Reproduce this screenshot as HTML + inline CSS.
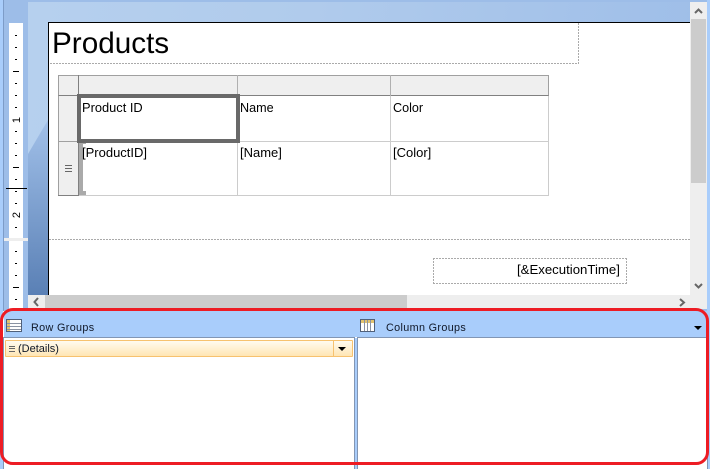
<!DOCTYPE html>
<html><head><meta charset="utf-8"><style>
html,body{margin:0;padding:0;background:#fff}
#r{position:relative;width:710px;height:469px;overflow:hidden;background:#fff;font-family:"Liberation Sans",sans-serif;color:#000}
#r div{position:absolute;box-sizing:border-box}
.t{font-size:12.6px;line-height:14px;white-space:nowrap}
.h{background:#efefef}
.dh{height:1px;background:repeating-linear-gradient(90deg,#aaa 0 2px,#fff 2px 3px)}
.dv{width:1px;background:repeating-linear-gradient(180deg,#aaa 0 2px,#fff 2px 3px)}
svg{position:absolute;overflow:visible}
</style></head><body><div id="r">
<div style="left:0;top:0;width:710px;height:311px;background:#9dbde8"></div>
<div style="left:0;top:0;width:3px;height:311px;background:#a9cdfb"></div>
<div style="left:3px;top:0;width:1px;height:311px;background:#7d9cc8"></div>
<div style="left:707px;top:0;width:3px;height:469px;background:#a9cdfb"></div>
<div style="left:28px;top:2px;width:662px;height:293px;background:linear-gradient(100deg,#b6d0ee 0%,#b0cbec 40%,#9dbde8 100%)"></div>
<div style="left:28px;top:120px;width:20px;height:175px;background:linear-gradient(180deg,#a2c0e8 0%,#8fb0dc 25%,#5a80b5 100%);clip-path:polygon(0 34px,20px 0,20px 100%,0 100%)"></div>
<div style="left:9px;top:23px;width:14px;height:286px;background:#fff"></div>
<div style="left:4px;top:238px;width:24px;height:3px;background:#eee"></div>
<div style="left:6px;top:188px;width:21px;height:1px;background:#000"></div>
<svg width="30" height="310" style="left:0;top:0" shape-rendering="crispEdges">
<g fill="#000">
<rect x="15" y="35" width="2" height="1"/><rect x="15" y="47" width="2" height="1"/><rect x="15" y="59" width="2" height="1"/><rect x="13" y="71" width="6" height="1"/><rect x="15" y="83" width="2" height="1"/><rect x="15" y="95" width="2" height="1"/><rect x="15" y="107" width="2" height="1"/><rect x="15" y="131" width="2" height="1"/><rect x="15" y="143" width="2" height="1"/><rect x="15" y="155" width="2" height="1"/><rect x="13" y="167" width="6" height="1"/><rect x="15" y="179" width="2" height="1"/><rect x="15" y="191" width="2" height="1"/><rect x="15" y="203" width="2" height="1"/><rect x="15" y="227" width="2" height="1"/><rect x="15" y="251" width="2" height="1"/><rect x="15" y="263" width="2" height="1"/><rect x="15" y="275" width="2" height="1"/><rect x="13" y="287" width="6" height="1"/><rect x="15" y="299" width="2" height="1"/>
</g>
<text transform="translate(20,120) rotate(-90)" font-family="Liberation Sans" font-size="11" text-anchor="middle">1</text>
<text transform="translate(20,215) rotate(-90)" font-family="Liberation Sans" font-size="11" text-anchor="middle">2</text>
</svg>
<!-- page -->
<div style="left:48px;top:22px;width:642px;height:273px;background:#fff;border-top:1px solid #000;border-left:1px solid #000"></div>
<div class="dh" style="left:50px;top:63px;width:529px"></div>
<div class="dv" style="left:578px;top:23px;height:41px"></div>
<div class="t" style="left:52px;top:27px;font-size:29.7px;line-height:33px">Products</div>
<!-- table -->
<div class="h" style="left:58px;top:75px;width:491px;height:21px;border:1px solid #a0a0a0;border-bottom:1px solid #808080"></div>
<div class="h" style="left:58px;top:96px;width:21px;height:100px;border-left:1px solid #a0a0a0;border-right:1px solid #808080"></div>
<div style="left:78px;top:75px;width:1px;height:21px;background:#808080"></div>
<div style="left:237px;top:75px;width:1px;height:21px;background:#b0b0b0"></div>
<div style="left:390px;top:75px;width:1px;height:21px;background:#b0b0b0"></div>
<div style="left:58px;top:141px;width:21px;height:1px;background:#a0a0a0"></div>
<div style="left:58px;top:195px;width:21px;height:1px;background:#808080"></div>
<div style="left:79px;top:195px;width:470px;height:1px;background:#ccc"></div>
<div style="left:79px;top:141px;width:470px;height:1px;background:#ccc"></div>
<div style="left:548px;top:96px;width:1px;height:100px;background:#ccc"></div>
<div style="left:237px;top:96px;width:1px;height:100px;background:#ccc"></div>
<div style="left:390px;top:96px;width:1px;height:100px;background:#ccc"></div>
<div style="left:79px;top:141px;width:7px;height:54px;background:#aaa"></div>
<div style="left:83px;top:144px;width:3px;height:47px;background:#fff"></div>
<div style="left:83px;top:191px;width:3px;height:4px;background:#aaa"></div>
<div style="left:77px;top:94px;width:163px;height:49px;border:4px solid #696969;background:#fff"></div>
<div style="left:65px;top:165px;width:7px;height:1px;background:#666"></div>
<div style="left:65px;top:168px;width:7px;height:1px;background:#666"></div>
<div style="left:65px;top:171px;width:7px;height:1px;background:#666"></div>
<div class="t" style="left:82px;top:101px;font-size:12.85px">Product ID</div>
<div class="t" style="left:240px;top:101px">Name</div>
<div class="t" style="left:393px;top:101px">Color</div>
<div class="t" style="left:82px;top:146px;font-size:13px">[ProductID]</div>
<div class="t" style="left:240px;top:146px;font-size:13px">[Name]</div>
<div class="t" style="left:393px;top:146px;font-size:13px">[Color]</div>
<div class="dh" style="left:49px;top:239px;width:641px"></div>
<div class="dh" style="left:433px;top:258px;width:194px"></div>
<div class="dh" style="left:433px;top:283px;width:194px"></div>
<div class="dv" style="left:433px;top:258px;height:26px"></div>
<div class="dv" style="left:626px;top:258px;height:26px"></div>
<div class="t" style="left:517px;top:263px;font-size:13.2px">[&amp;ExecutionTime]</div>
<!-- scrollbars -->
<div style="left:690px;top:2px;width:17px;height:307px;background:#eee"></div>
<div style="left:691px;top:19px;width:15px;height:164px;background:#ccc"></div>
<div style="left:28px;top:295px;width:662px;height:14px;background:#eee"></div>
<div style="left:45px;top:295px;width:362px;height:14px;background:#ccc"></div>
<svg width="710" height="310" style="left:0;top:0" fill="none" stroke="#666" stroke-width="2">
<path d="M695 13 L698.5 9.5 L702 13"/>
<path d="M695 284 L698.5 287.5 L702 284"/>
<path d="M38 298 L34.5 302 L38 306"/>
<path d="M680 299 L684 302.5 L680 306"/>
</svg>
<!-- groups panel -->
<div style="left:0;top:311px;width:3px;height:158px;background:#a9cdfb"></div>
<div style="left:4px;top:311px;width:703px;height:26px;background:#a9cdfb"></div>
<div style="left:3px;top:337px;width:352px;height:1px;background:#8296b4"></div>
<div style="left:357px;top:337px;width:350px;height:1px;background:#8296b4"></div>
<div style="left:3px;top:338px;width:352px;height:131px;background:#fff;border-left:1px solid #8296b4;border-right:1px solid #8296b4"></div>
<div style="left:355px;top:338px;width:2px;height:131px;background:#a9cdfb"></div>
<div style="left:357px;top:338px;width:350px;height:131px;background:#fff;border-left:1px solid #8296b4"></div>
<div style="left:707px;top:337px;width:1px;height:132px;background:#8296b4"></div>
<svg width="20" height="16" style="left:5px;top:318px" shape-rendering="crispEdges">
<rect x="1.5" y="1.5" width="15" height="12" fill="#fff" stroke="#50607a"/>
<rect x="2" y="2" width="3" height="11" fill="#e2c26e"/>
<path d="M2 5.5H16M2 8.5H16M2 11.5H16" stroke="#8a93a3"/>
</svg>
<div class="t" style="left:31px;top:321px;font-size:10.8px;letter-spacing:.35px;color:#101828">Row Groups</div>
<svg width="20" height="16" style="left:359px;top:318px" shape-rendering="crispEdges">
<rect x="1.5" y="1.5" width="14" height="12" fill="#fff" stroke="#50607a"/>
<rect x="2" y="2" width="13" height="3" fill="#e2c26e"/>
<path d="M5.5 2V13M8.5 2V13M11.5 2V13" stroke="#8a93a3"/>
</svg>
<div class="t" style="left:386px;top:321px;font-size:10.8px;letter-spacing:.35px;color:#101828">Column Groups</div>
<svg width="10" height="6" style="left:694px;top:326px"><path d="M0 0H8L4 4Z" fill="#000"/></svg>
<div style="left:5px;top:340px;width:348px;height:17px;border:1px solid #f7c26f;border-radius:1px;background:linear-gradient(180deg,#fffbf0,#ffe6b4)"></div>
<div style="left:333px;top:340px;width:1px;height:17px;background:#f7c26f"></div>
<svg width="10" height="6" style="left:338px;top:347px"><path d="M0 0H8L4 4Z" fill="#000"/></svg>
<div style="left:9px;top:346px;width:6px;height:1px;background:#666"></div>
<div style="left:9px;top:348px;width:6px;height:1px;background:#666"></div>
<div style="left:9px;top:351px;width:6px;height:1px;background:#666"></div>
<div class="t" style="left:18px;top:342px;font-size:11px;color:#101828">(Details)</div>
<!-- red highlight -->
<div style="left:0;top:308px;width:709px;height:157px;border:3px solid #ed1c24;border-radius:13px"></div>
</div></body></html>
